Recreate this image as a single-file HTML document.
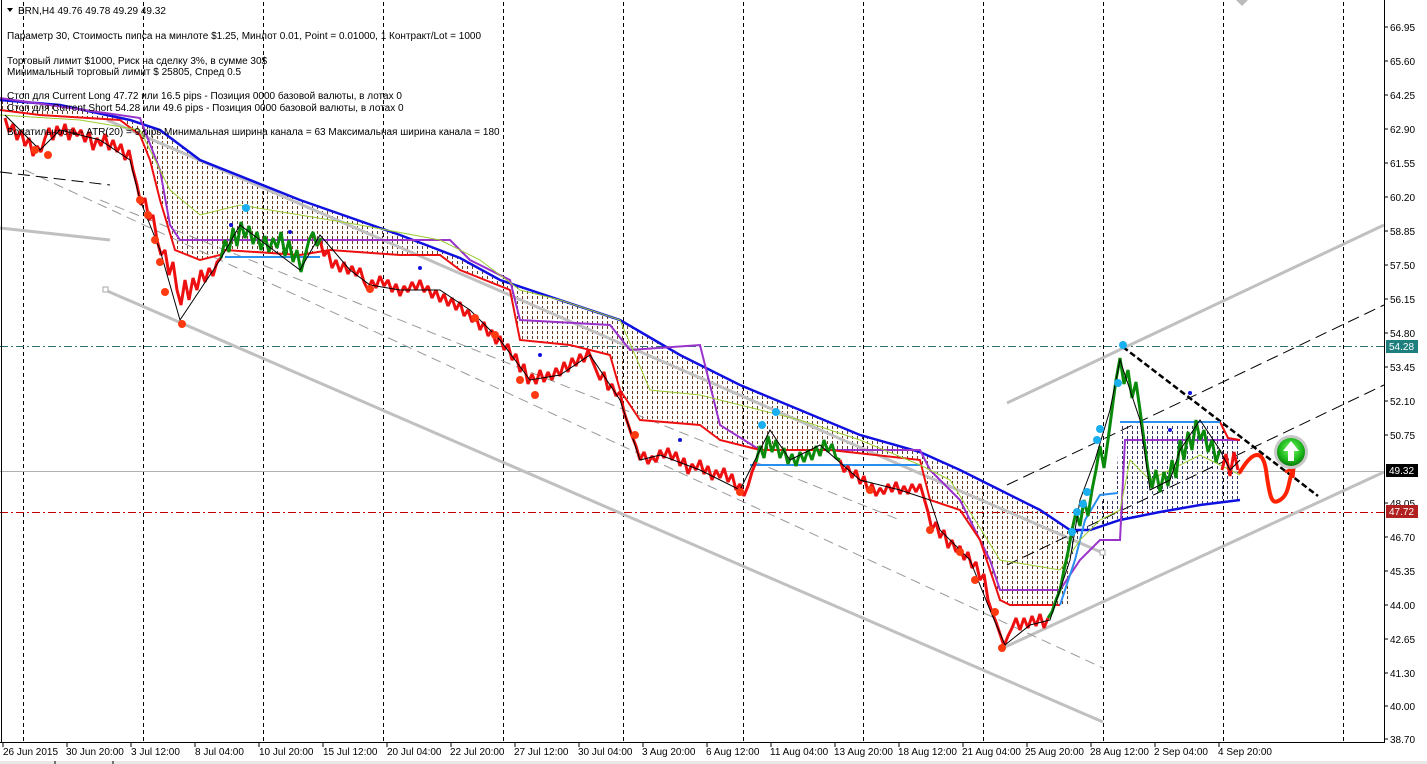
<!DOCTYPE html>
<html><head><meta charset="utf-8"><style>
html,body{margin:0;padding:0;background:#fff;}
body{width:1427px;height:764px;overflow:hidden;position:relative;font-family:"Liberation Sans","DejaVu Sans",sans-serif;}
svg{position:absolute;left:0;top:0;}
text{font-family:"Liberation Sans","DejaVu Sans",sans-serif;font-size:10px;fill:#000;}
</style></head><body>
<svg width="1427" height="764" viewBox="0 0 1427 764">
<defs>
<pattern id="dots" width="5" height="5" patternUnits="userSpaceOnUse"><rect x="2" y="1" width="1" height="3" fill="#6a3a20"/></pattern>
<pattern id="dots2" width="5" height="5" patternUnits="userSpaceOnUse"><rect x="2" y="1" width="1" height="3" fill="#333366"/></pattern>
<radialGradient id="gr" cx="50%" cy="40%" r="60%"><stop offset="0" stop-color="#7dff6a"/><stop offset="0.7" stop-color="#18b418"/><stop offset="1" stop-color="#0a7a0a"/></radialGradient>
</defs>
<rect x="0" y="0" width="1427" height="764" fill="#fff"/>
<g stroke="#000" stroke-width="1" stroke-dasharray="4,3">
<line x1="23.5" y1="2" x2="23.5" y2="742"/><line x1="143.5" y1="2" x2="143.5" y2="742"/><line x1="263.5" y1="2" x2="263.5" y2="742"/><line x1="383.5" y1="2" x2="383.5" y2="742"/><line x1="503.5" y1="2" x2="503.5" y2="742"/><line x1="623.5" y1="2" x2="623.5" y2="742"/><line x1="743.5" y1="2" x2="743.5" y2="742"/><line x1="863.5" y1="2" x2="863.5" y2="742"/><line x1="983.5" y1="2" x2="983.5" y2="742"/><line x1="1103.5" y1="2" x2="1103.5" y2="742"/><line x1="1223.5" y1="2" x2="1223.5" y2="742"/><line x1="1343.5" y1="2" x2="1343.5" y2="742"/>
</g>
<polygon fill="url(#dots)" points="0,100 60,105 130,120 160,130 200,160 300,200 400,235 460,258 500,280 560,300 620,320 680,355 740,385 800,410 860,435 920,452 960,470 1000,490 1040,510 1070,530 1070,605 1060,605 1010,605 1000,600 980,540 960,510 930,500 920,460 830,450 760,450 720,440 700,425 640,420 620,390 610,355 570,345 520,340 510,290 460,270 440,255 400,255 330,250 300,255 225,250 220,255 200,260 175,250 160,200 150,160 140,135 120,120 40,115 0,110"/>
<polygon fill="url(#dots2)" points="1070,530 1090,530 1120,520 1160,512 1200,505 1240,500 1240,440 1230,440 1220,425 1120,425 1115,500 1100,500 1080,540 1070,560"/>
<line x1="0" y1="346.5" x2="1384" y2="346.5" stroke="#2f6f6f" stroke-dasharray="8,3,2,3"/>
<line x1="0" y1="471.5" x2="1384" y2="471.5" stroke="#b0b0b0"/>
<line x1="0" y1="512.5" x2="1384" y2="512.5" stroke="#c00000" stroke-dasharray="8,3,2,3"/>
<g stroke="#c0c0c0" stroke-width="3" fill="none">
<line x1="105" y1="290" x2="1103" y2="722"/>
<line x1="1007" y1="403" x2="1384" y2="225"/>
<line x1="1005" y1="647" x2="1384" y2="472"/>
<polyline points="0,228 110,240"/>
<line x1="107" y1="120" x2="1103" y2="553"/>
</g>
<rect x="103" y="287" width="5" height="5" fill="#fff" stroke="#aaa"/>
<rect x="1100" y="550" width="5" height="5" fill="#fff" stroke="#aaa"/>
<g stroke="#999" stroke-width="1" stroke-dasharray="10,6" fill="none">
<line x1="25" y1="170" x2="1103" y2="668"/>
<line x1="100" y1="200" x2="900" y2="520"/>
</g>
<g stroke="#000" stroke-width="1" stroke-dasharray="12,6" fill="none">
<line x1="1007" y1="485" x2="1384" y2="305"/>
<line x1="1007" y1="565" x2="1384" y2="385"/>
<line x1="0" y1="172" x2="110" y2="185"/>
</g>
<line x1="1123" y1="347" x2="1318" y2="496" stroke="#000" stroke-width="2.5" stroke-dasharray="6,3"/>
<polyline fill="none" stroke="#1010e0" stroke-width="2.5" points="0,100 60,105 130,120 160,130 200,160 300,200 400,235 460,258 500,280 560,300 620,320 680,355 740,385 800,410 860,435 920,452 960,470 1000,490 1040,510 1070,530 1090,530 1120,520 1160,512 1200,505 1240,500"/>
<polyline fill="none" stroke="#9933cc" stroke-width="2" points="0,98 140,118 160,170 170,225 180,240 450,240 470,260 510,280 520,320 610,325 630,350 700,345 720,425 760,450 920,450 930,470 960,500 990,560 1000,590 1060,590 1080,560 1100,540 1120,540 1125,440 1240,440"/>
<polyline fill="none" stroke="#ee1010" stroke-width="2" points="0,110 40,115 120,120 140,135 150,160 160,200 175,250 200,260 220,255 225,250 300,255 330,250 400,255 440,255 460,270 510,290 520,340 570,345 610,355 620,390 640,420 700,425 720,440 760,450 830,450 920,460 930,500 960,510 980,540 1000,600 1010,605 1060,605"/>
<polyline fill="none" stroke="#ee1010" stroke-width="2" points="1220,422 1228,438 1240,440"/>
<g stroke="#2b8fef" stroke-width="2" fill="none">
<line x1="225" y1="257" x2="320" y2="257"/>
<line x1="750" y1="465" x2="920" y2="465"/>
<line x1="1120" y1="422" x2="1220" y2="422"/>
<polyline points="1060,605 1075,560 1085,520 1100,495 1118,493"/>
</g>
<polyline fill="none" stroke="#9acd32" stroke-width="1" points="0,115 80,120 140,130 170,190 200,215 240,205 300,215 360,225 440,240 480,260 520,290 560,300 620,320 650,390 700,395 760,410 800,420 860,440 920,465 950,480 1000,560 1030,565 1060,570 1080,540 1100,520 1120,510 1130,460 1150,480 1170,470 1200,455 1230,470 1240,475"/>
<!-- dense candles (red) -->
<polyline fill="none" stroke="#ee1010" stroke-width="3" stroke-linejoin="bevel" points="5,118 9,132 13,124 17,140 21,130 25,146 29,138 33,156 37,146 41,152 45,138 49,128 53,140 57,126 61,136 65,124 69,140 73,128 77,136 81,130 85,142 89,132 93,150 97,138 101,146 105,134 109,150 113,140 117,152 121,144 125,160 129,150 133,170 137,185 141,205 145,198 149,220 153,215 157,240 161,255 165,250 169,275 173,262 177,290 181,305 185,280 189,300 193,278 197,290 201,270 205,282 209,268 213,276 217,262 221,258"/>
<polyline fill="none" stroke="#ee1010" stroke-width="3" stroke-linejoin="bevel" points="320,240 324,256 328,250 332,268 336,260 340,272 344,262 348,274 352,266 356,276 360,268 364,282 368,290 372,280 376,288 380,276 384,286 388,280 392,292 396,284 400,296 404,286 408,292 412,282 416,290 420,280 424,292 428,286 432,298 436,290 440,302 444,294 448,306 452,298 456,310 460,302 464,316 468,310 472,322 476,316 480,330 484,322 488,336 492,330 496,344 500,336 504,350 508,344 512,360 516,354 520,372 524,364 528,384 532,374 536,384 540,370 544,382 548,372 552,380 556,368 560,376 564,362 568,372 572,358 576,366 580,354 584,362 588,350 592,360 596,370 600,380 604,372 608,390 612,384 616,396 620,392 624,412 628,424 632,436 636,446 640,460 644,452 648,464 652,456 656,462 660,450 664,458 668,448 672,460 676,452 680,466 684,458 688,474 692,464 696,470 700,460 704,474 708,466 712,480 716,470 720,478 724,468 728,482 732,474 736,490 740,484 744,496 748,486 752,472 756,462"/>
<polyline fill="none" stroke="#ee1010" stroke-width="3" stroke-linejoin="bevel" points="840,460 844,472 848,466 852,478 856,470 860,484 864,476 868,492 872,484 876,496 880,488 884,494 888,484 892,492 896,482 900,494 904,486 908,494 912,484 916,492 920,484 924,498 928,512 932,530 936,522 940,538 944,530 948,548 952,540 956,552 960,546 964,560 968,552 972,568 976,562 980,580 984,574 988,600 992,612 996,622 1000,634 1004,646 1008,636 1012,628 1016,618 1020,630 1024,618 1028,628 1032,616 1036,626 1040,614 1044,628 1048,618"/>
<polyline fill="none" stroke="#ee1010" stroke-width="3" points="1222,470 1226,454 1230,476 1234,452 1238,470"/>
<!-- green -->
<polyline fill="none" stroke="#0a8a0a" stroke-width="3" stroke-linejoin="bevel" points="221,258 225,240 229,252 233,228 237,246 241,222 245,238 249,226 253,244 257,232 261,250 265,236 269,252 273,238 277,248 281,232 285,256 289,240 293,262 297,250 301,272 305,256 309,240 313,232 317,246 321,238"/>
<polyline fill="none" stroke="#0a8a0a" stroke-width="3" stroke-linejoin="bevel" points="756,462 760,446 764,458 768,436 772,452 776,440 780,458 784,448 788,464 792,454 796,466 800,452 804,462 808,450 812,460 816,446 820,456 824,440 828,452 832,444 836,458 840,460"/>
<polyline fill="none" stroke="#0a8a0a" stroke-width="3" stroke-linejoin="bevel" points="1048,618 1052,612 1056,600 1060,590 1064,570 1068,552 1072,530 1076,512 1080,526 1084,500 1088,516 1092,490 1096,470 1100,446 1104,468 1108,440 1112,410 1116,380 1120,358 1124,384 1128,370 1132,398 1136,382 1140,410 1144,440 1148,470 1152,488 1156,470 1160,492 1164,472 1168,486 1172,460 1176,478 1180,440 1184,460 1188,432 1192,450 1196,420 1200,440 1204,430 1208,452 1212,440 1216,462 1220,450"/>
<polyline fill="none" stroke="#000" stroke-width="1" points="5,115 40,150 60,130 100,140 130,160 140,200 160,250 180,320 200,290 220,260 240,225 260,240 300,270 320,235 350,270 370,285 400,290 440,290 470,310 500,340 530,380 560,375 590,355 620,400 640,460 660,455 700,470 740,490 770,430 790,460 820,445 860,480 900,490 930,500 940,530 970,560 990,610 1005,645 1030,625 1050,620 1070,560 1080,500 1095,460 1110,410 1120,360 1130,390 1140,420 1150,490 1170,480 1180,450 1200,420 1220,450 1230,470 1240,460"/>
<g fill="#ff3a10">
<circle cx="35" cy="150" r="4"/><circle cx="48" cy="155" r="4"/><circle cx="140" cy="200" r="4"/><circle cx="148" cy="215" r="4"/><circle cx="155" cy="240" r="4"/><circle cx="160" cy="262" r="4"/><circle cx="165" cy="292" r="4"/><circle cx="182" cy="324" r="4"/><circle cx="370" cy="289" r="4"/><circle cx="475" cy="318" r="4"/><circle cx="495" cy="335" r="4"/><circle cx="520" cy="380" r="4"/><circle cx="535" cy="395" r="4"/><circle cx="635" cy="435" r="4"/><circle cx="740" cy="492" r="4"/><circle cx="870" cy="490" r="4"/><circle cx="930" cy="530" r="4"/><circle cx="960" cy="552" r="4"/><circle cx="975" cy="580" r="4"/><circle cx="995" cy="612" r="4"/><circle cx="1002" cy="648" r="4"/>
</g>
<g fill="#1ab0f0"><circle cx="246" cy="208" r="4"/><circle cx="762" cy="425" r="4"/><circle cx="776" cy="412" r="4"/><circle cx="1072" cy="532" r="4"/><circle cx="1077" cy="512" r="4"/><circle cx="1083" cy="504" r="4"/><circle cx="1087" cy="492" r="4"/><circle cx="1097" cy="440" r="4"/><circle cx="1100" cy="429" r="4"/><circle cx="1118" cy="383" r="4"/><circle cx="1123" cy="345" r="4"/></g>
<g fill="#1010dd"><circle cx="231" cy="225" r="2"/><circle cx="290" cy="232" r="2"/><circle cx="420" cy="268" r="2"/><circle cx="540" cy="355" r="2"/><circle cx="680" cy="440" r="2"/><circle cx="1190" cy="393" r="2"/><circle cx="1170" cy="430" r="2"/></g>
<path d="M1240 472 C1250 455,1262 445,1266 470 C1270 500,1272 505,1280 500 C1290 494,1288 480,1293 470" fill="none" stroke="#ff2200" stroke-width="4" stroke-linecap="round"/>
<path d="M1285 472 L1294 468 L1293 478" fill="none" stroke="#ff2200" stroke-width="3"/>
<circle cx="1291" cy="452" r="17" fill="#c8c8c8"/>
<circle cx="1291" cy="452" r="14" fill="url(#gr)"/>
<path d="M1291 441 L1283 451 L1288 451 L1288 461 L1294 461 L1294 451 L1299 451 Z" fill="#fff"/>
<line x1="1.5" y1="0" x2="1.5" y2="742" stroke="#000"/>
<line x1="1384.5" y1="0" x2="1384.5" y2="742" stroke="#000"/>
<line x1="0" y1="742.5" x2="1385" y2="742.5" stroke="#000"/>
<g stroke="#000"><path d="M1384 27h4M1384 61h4M1384 95h4M1384 129h4M1384 163h4M1384 197h4M1384 231h4M1384 265h4M1384 299h4M1384 333h4M1384 367h4M1384 401h4M1384 435h4M1384 503h4M1384 537h4M1384 571h4M1384 605h4M1384 639h4M1384 673h4M1384 706h4M1384 739h4"/></g>
<g>
<text x="1390" y="31">66.95</text><text x="1390" y="65">65.60</text><text x="1390" y="99">64.25</text><text x="1390" y="133">62.90</text><text x="1390" y="167">61.55</text><text x="1390" y="201">60.20</text><text x="1390" y="235">58.85</text><text x="1390" y="269">57.50</text><text x="1390" y="303">56.15</text><text x="1390" y="337">54.80</text><text x="1390" y="371">53.45</text><text x="1390" y="405">52.10</text><text x="1390" y="439">50.75</text><text x="1390" y="507">48.05</text><text x="1390" y="541">46.70</text><text x="1390" y="575">45.35</text><text x="1390" y="609">44.00</text><text x="1390" y="643">42.65</text><text x="1390" y="677">41.30</text><text x="1390" y="710">40.00</text><text x="1390" y="743">38.70</text>
</g>
<rect x="1386" y="340" width="32" height="13" fill="#1f7f7f"/><text x="1389" y="350" style="fill:#fff">54.28</text>
<rect x="1386" y="464" width="32" height="13" fill="#000"/><text x="1389" y="474" style="fill:#fff">49.32</text>
<rect x="1386" y="505" width="32" height="13" fill="#b02020"/><text x="1389" y="515" style="fill:#fff">47.72</text>
<g stroke="#000"><path d="M3 742v5M67 742v5M131 742v5M195 742v5M259 742v5M323 742v5M387 742v5M451 742v5M515 742v5M579 742v5M643 742v5M707 742v5M771 742v5M835 742v5M899 742v5M963 742v5M1027 742v5M1091 742v5M1155 742v5M1219 742v5"/></g>
<g>
<text x="3" y="755">26 Jun 2015</text><text x="66" y="755">30 Jun 20:00</text><text x="131" y="755">3 Jul 12:00</text><text x="195" y="755">8 Jul 04:00</text><text x="259" y="755">10 Jul 20:00</text><text x="323" y="755">15 Jul 12:00</text><text x="387" y="755">20 Jul 04:00</text><text x="450" y="755">22 Jul 20:00</text><text x="514" y="755">27 Jul 12:00</text><text x="578" y="755">30 Jul 04:00</text><text x="642" y="755">3 Aug 20:00</text><text x="706" y="755">6 Aug 12:00</text><text x="770" y="755">11 Aug 04:00</text><text x="834" y="755">13 Aug 20:00</text><text x="898" y="755">18 Aug 12:00</text><text x="962" y="755">21 Aug 04:00</text><text x="1025" y="755">25 Aug 20:00</text><text x="1090" y="755">28 Aug 12:00</text><text x="1154" y="755">2 Sep 04:00</text><text x="1218" y="755">4 Sep 20:00</text>
</g>
<rect x="0" y="761" width="1427" height="3" fill="#e8e8e8"/>
<line x1="55" y1="761" x2="55" y2="764" stroke="#000"/><line x1="113" y1="761" x2="113" y2="764" stroke="#000"/>
<path d="M7 8h6l-3 4z" fill="#000"/>
<text x="18" y="14">BRN,H4  49.76 49.78 49.29 49.32</text>
<text x="7" y="39">Параметр 30,  Стоимость пипса на минлоте  $1.25,   Минлот 0.01,  Point = 0.01000,  1 Контракт/Lot = 1000</text>
<text x="7" y="64">Торговый лимит  $1000, Риск на сделку 3%,  в сумме 30$</text>
<text x="7" y="75">Минимальный торговый лимит  $ 25805,    Спред  0.5</text>
<text x="7" y="99">Стоп для Current Long  47.72  или  16.5 pips -  Позиция 0000 базовой валюты,  в лотах 0</text>
<text x="7" y="111">Стоп для Current Short 54.28  или  49.6 pips -  Позиция 0000 базовой валюты,  в лотах 0</text>
<text x="7" y="135">Волатильность - ATR(20) = 9 pips   Минимальная ширина канала = 63    Максимальная ширина канала = 180</text>
<path d="M1236 0l6 6 6-6z" fill="#bbb"/>
</svg>
</body></html>
